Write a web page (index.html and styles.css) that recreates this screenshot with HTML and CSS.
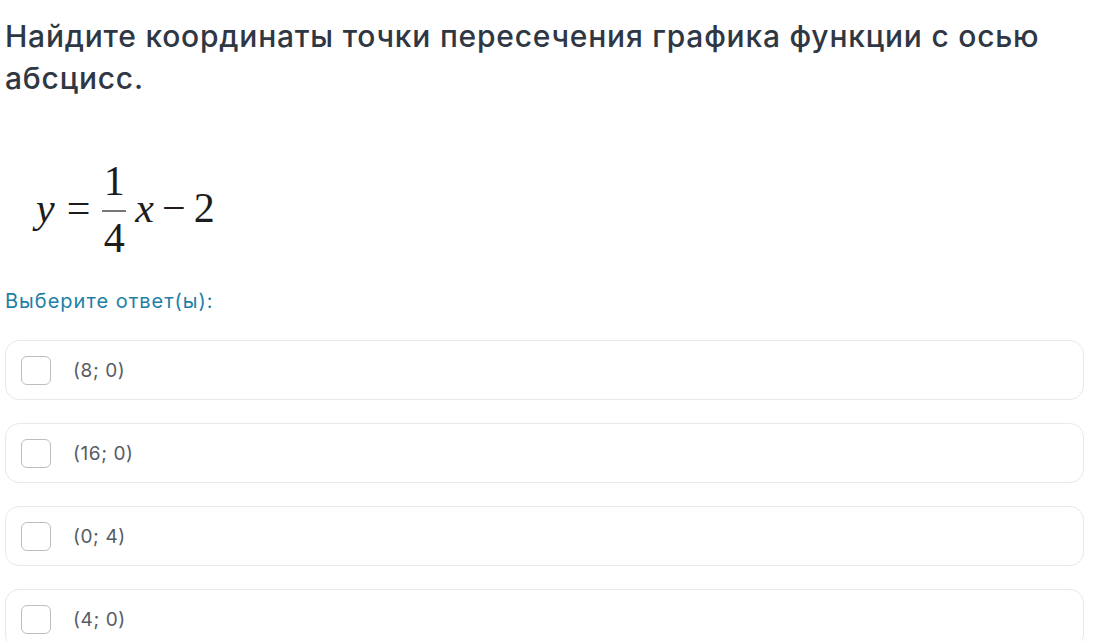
FILE: index.html
```html
<!DOCTYPE html>
<html lang="ru">
<head>
<meta charset="utf-8">
<link rel="stylesheet" href="styles.css">
</head>
<body>
<div class="page">
  <h1 class="question">Найдите координаты точки пересечения графика функции с осью абсцисс.</h1>
  <div class="formula">
    <span class="part var y">y</span>
    <span class="part op eq">=</span>
    <span class="frac"><span class="num">1</span><span class="bar"></span><span class="den">4</span></span>
    <span class="part var x">x</span>
    <span class="part op minus">−</span>
    <span class="part digit">2</span>
  </div>
  <div class="prompt">Выберите ответ(ы):</div>
  <div class="options">
    <label class="option"><span class="box"></span><span class="opt-text">(8; 0)</span></label>
    <label class="option"><span class="box"></span><span class="opt-text">(16; 0)</span></label>
    <label class="option"><span class="box"></span><span class="opt-text">(0; 4)</span></label>
    <label class="option"><span class="box"></span><span class="opt-text">(4; 0)</span></label>
  </div>
</div>
</body>
</html>
```

FILE: styles.css
```css
* { box-sizing: border-box; }
html, body { margin: 0; padding: 0; background: #ffffff; }
body { overflow: hidden; }
.page {
  padding: 15px 14px 0 5px;
  font-family: Inter, "Noto Sans", sans-serif;
}
.question {
  margin: 0;
  font-size: 30px;
  font-weight: 500;
  line-height: 42px;
  color: #2f3744;
  letter-spacing: 0.78px;
}
.formula {
  display: flex;
  align-items: flex-start;
  margin: 66px 0 0 31px;
  font-family: "Liberation Serif", "Times New Roman", serif;
  font-size: 42px;
  color: #1c1c1c;
}
.part {
  line-height: 42px;
  margin-top: 22px;
}
.var { font-style: italic; }
.eq { margin-left: 12px; margin-right: 12px; }
.x { margin-left: 9px; }
.minus { margin-left: 8px; }
.digit { margin-left: 8px; }
.frac {
  display: inline-flex;
  flex-direction: column;
  align-items: center;
}
.num, .den { line-height: 32px; }
.bar {
  width: 24px;
  height: 1.5px;
  background: #777;
  margin: 13px 0 10.5px;
}
.prompt {
  margin-top: 34px;
  font-size: 20px;
  line-height: 26px;
  letter-spacing: 1px;
  color: #1e7fa6;
}
.options {
  display: flex;
  flex-direction: column;
  gap: 23px;
  margin-top: 26px;
}
.option {
  display: flex;
  align-items: center;
  height: 60px;
  border: 1px solid #e9e9e9;
  border-radius: 14px;
  padding-left: 15px;
}
.box {
  width: 30px;
  height: 29px;
  border: 1px solid #bdbdbd;
  border-radius: 6px;
  margin-right: 22px;
  flex: none;
}
.opt-text {
  font-size: 19px;
  letter-spacing: 0.6px;
  color: #575c63;
}
```
